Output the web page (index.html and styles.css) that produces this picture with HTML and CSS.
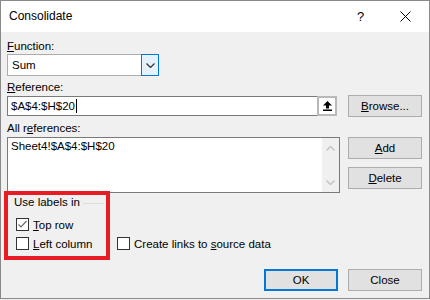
FILE: index.html
```html
<!DOCTYPE html>
<html lang="en">

<head>
    <meta charset="UTF-8">
    <title>Consolidate</title>
    <link rel="stylesheet" href="styles.css">
</head>

<body>
    <div class="window">
        <div class="titlebar">
            <span class="title">Consolidate</span>
            <span class="help">?</span>
            <span class="close">
                <svg width="11" height="11" viewBox="0 0 11 11">
                    <path d="M0.5 0.5 L10.5 10.5 M10.5 0.5 L0.5 10.5" stroke="#000" stroke-width="1" fill="none" />
                </svg>
            </span>
        </div>

        <div class="content">
            <div class="label label-function"><u>F</u>unction:</div>
            <div class="combo">
                <span class="combo-value">Sum</span>
                <span class="combo-btn">
                    <svg width="9" height="5" viewBox="0 0 9 5">
                        <path d="M0.5 0.5 L4.5 4.5 L8.5 0.5" stroke="#333" stroke-width="1.2" fill="none" />
                    </svg>
                </span>
            </div>

            <div class="label label-ref"><u>R</u>eference:</div>
            <div class="grid-row center">
                <div class="ref-input">
                    <span class="ref-value">$A$4:$H$20</span><span class="caret"></span>
                    <span class="collapse-btn">
                        <svg width="9" height="10" viewBox="0 0 9 10">
                            <path d="M4.5 0 L9 4.5 L6 4.5 L6 7.5 L3 7.5 L3 4.5 L0 4.5 Z" fill="#000" />
                            <rect x="0" y="8.5" width="9" height="1.5" fill="#000" />
                        </svg>
                    </span>
                </div>
                <button class="btn"><u>B</u>rowse...</button>
            </div>

            <div class="label label-all">All r<u>e</u>ferences:</div>
            <div class="grid-row">
                <div class="listbox">
                    <div class="list-items">
                        <div class="list-item">Sheet4!$A$4:$H$20</div>
                    </div>
                    <div class="scrollbar">
                        <svg width="9" height="5" viewBox="0 0 9 5">
                            <path d="M0.5 4.5 L4.5 0.5 L8.5 4.5" stroke="#c2c2c2" stroke-width="1.4" fill="none" />
                        </svg>
                        <svg width="9" height="5" viewBox="0 0 9 5">
                            <path d="M0.5 0.5 L4.5 4.5 L8.5 0.5" stroke="#c2c2c2" stroke-width="1.4" fill="none" />
                        </svg>
                    </div>
                </div>
                <div class="btn-stack">
                    <button class="btn"><u>A</u>dd</button>
                    <button class="btn"><u>D</u>elete</button>
                </div>
            </div>

            <div class="options">
                <div class="group">
                    <div class="group-title">
                        <span>Use labels in</span>
                        <span class="group-line"></span>
                    </div>
                    <label class="check">
                        <span class="box">
                            <svg width="11" height="11" viewBox="0 0 11 11">
                                <path d="M1.5 5.5 L4 8 L9.5 2" stroke="#6a6a6a" stroke-width="1.2" fill="none" />
                            </svg>
                        </span>
                        <span><u>T</u>op row</span>
                    </label>
                    <label class="check">
                        <span class="box"></span>
                        <span><u>L</u>eft column</span>
                    </label>
                </div>
                <label class="check links">
                    <span class="box"></span>
                    <span>Create links to <u>s</u>ource data</span>
                </label>
            </div>

            <div class="actions">
                <button class="btn btn-default">OK</button>
                <button class="btn">Close</button>
            </div>
        </div>

        <!-- annotation box drawn over the group -->
        <div class="highlight"></div>
    </div>
</body>

</html>
```

FILE: styles.css
```css
body {
    margin: 0;
    font-family: "Liberation Sans", Arial, sans-serif;
    font-size: 12px;
    color: #000;
    background-color: #f0f0f0;
}

.window {
    position: relative;
    width: 430px;
    height: 299px;
    box-sizing: border-box;
    border: 1px solid #8a8a8a;
    background-color: #f0f0f0;
}

.titlebar {
    display: flex;
    align-items: center;
    height: 31px;
    padding-left: 8px;
    background: #fff;
}

.title {
    flex: 1;
    padding-bottom: 1px;
}

.help {
    width: 8px;
    margin-right: 35px;
    font-size: 13px;
}

.close {
    display: flex;
    margin-right: 18px;
    margin-bottom: 1px;
}

.content {
    padding: 0 7px 0 6px;
    font-size: 11.5px;
}

.label {
    line-height: 15px;
}

.label-function {
    margin-top: 7px;
}

.label-ref {
    margin-top: 4px;
}

.label-all {
    margin-top: 4px;
}

.combo {
    display: flex;
    align-items: center;
    width: 152px;
    height: 22px;
    box-sizing: border-box;
    border: 1px solid #adadad;
    background: #fff;
}

.combo-value {
    flex: 1;
    padding-left: 4px;
}

.combo-btn {
    display: flex;
    align-items: center;
    justify-content: center;
    width: 18px;
    height: 22px;
    box-sizing: border-box;
    margin-right: -1px;
    border: 1px solid #0078d7;
    background: #e5f1fb;
}

.grid-row {
    display: grid;
    grid-template-columns: 333px 74px;
    column-gap: 8px;
}

.grid-row.center {
    align-items: center;
}

.ref-input {
    display: flex;
    align-items: center;
    width: 330px;
    height: 20px;
    box-sizing: border-box;
    border: 1px solid #7a7a7a;
    background: #fff;
}

.ref-value {
    padding-left: 3px;
}

.caret {
    width: 1px;
    height: 14px;
    margin-left: 1px;
    background: #000;
}

.collapse-btn {
    display: flex;
    align-items: center;
    justify-content: center;
    width: 20px;
    height: 20px;
    box-sizing: border-box;
    margin-left: auto;
    margin-right: -1px;
    border: 2px solid #b9b9b9;
    background: #fff;
}

.btn {
    height: 22px;
    padding: 0;
    border: 1px solid #adadad;
    background: #e1e1e1;
    font-family: inherit;
    font-size: 11.5px;
    color: #000;
}

.btn-default {
    border: 2px solid #0078d7;
}

.listbox {
    display: flex;
    height: 56px;
    margin-top: 1px;
    box-sizing: border-box;
    border: 1px solid #7a7a7a;
    background: #fff;
}

.list-items {
    flex: 1;
    padding: 1px 3px;
}

.list-item {
    line-height: 15px;
}

.scrollbar {
    display: flex;
    flex-direction: column;
    align-items: center;
    justify-content: space-between;
    width: 17px;
    padding: 8px 0 7px;
    background: #f0f0f0;
}

.btn-stack {
    display: flex;
    flex-direction: column;
    gap: 8px;
    margin-top: 1px;
}

.options {
    display: flex;
    align-items: flex-end;
    margin-top: 2px;
}

.group {
    width: 97px;
}

.group-title {
    display: flex;
    align-items: center;
    padding-left: 7px;
    line-height: 15px;
    margin-bottom: 5px;
}

.group-line {
    flex: 1;
    margin-left: 3px;
    margin-top: 1px;
    border-top: 1px solid #dcdcdc;
}

.check {
    display: flex;
    align-items: center;
    gap: 4px;
    height: 19px;
    padding-left: 9px;
}

.check.links {
    padding-left: 13px;
}

.box {
    display: flex;
    align-items: center;
    justify-content: center;
    width: 13px;
    height: 13px;
    box-sizing: border-box;
    border: 1px solid #333;
    background: #fff;
}

.actions {
    display: flex;
    justify-content: flex-end;
    gap: 10px;
    margin-top: 16px;
}

.actions .btn {
    width: 74px;
}

.grid-row .btn {
    width: 74px;
}

.highlight {
    position: absolute;
    left: 3px;
    top: 190px;
    width: 106px;
    height: 69px;
    box-sizing: border-box;
    border: 4px solid #e81c24;
}
```
